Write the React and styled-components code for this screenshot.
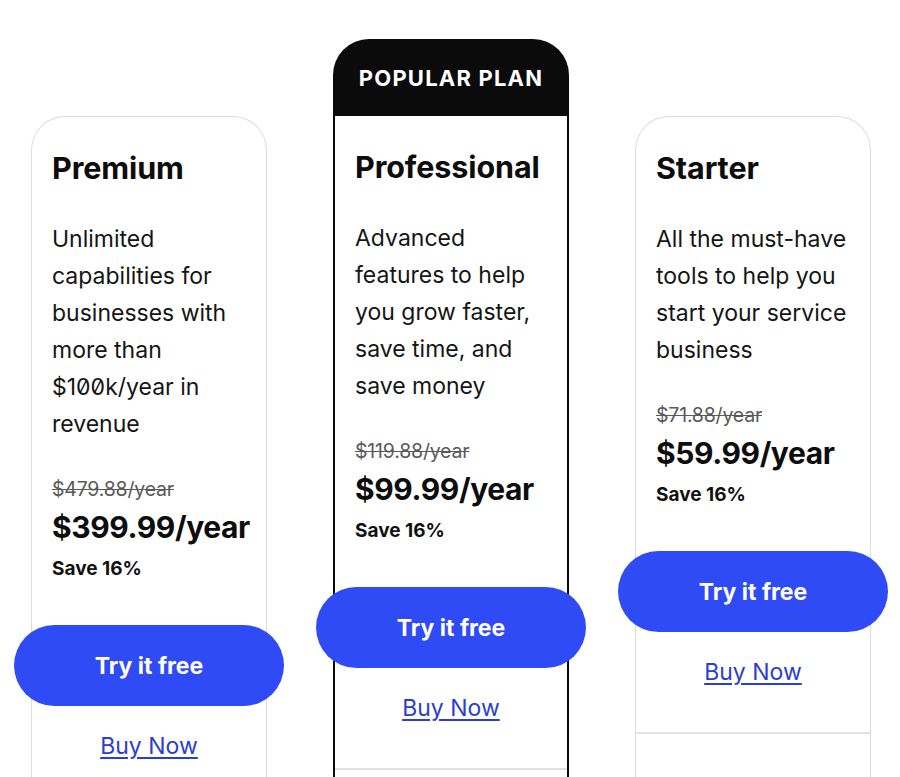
import React from "react";
import styled, { createGlobalStyle } from "styled-components";

const Global = createGlobalStyle`
  html, body { margin: 0; padding: 0; background: #fff; }
  body { font-family: Inter, "Noto Sans", "Liberation Sans", sans-serif; color: #111; overflow: hidden; }
`;

const Page = styled.div`
  display: flex;
  align-items: flex-start;
  gap: 66px;
  padding: 39px 0 0 31px;
  height: 777px;
  box-sizing: border-box;
  overflow: hidden;
`;

const Column = styled.div`
  width: 236px;
  flex-shrink: 0;
  display: flex;
  flex-direction: column;
  padding-top: ${(p) => (p.$featured ? "0" : "77px")};
`;

const Badge = styled.div`
  height: 77px;
  background: #0b0b0b;
  color: #fff;
  border-radius: 36px 36px 0 0;
  display: flex;
  align-items: center;
  justify-content: center;
  font-size: 22px;
  font-weight: 700;
  letter-spacing: 1.2px;
`;

const Card = styled.div`
  display: flex;
  flex-direction: column;
  background: #fff;
  border: ${(p) => (p.$featured ? "2px solid #0b0b0b" : "1.5px solid #dcdcdc")};
  border-top: ${(p) => (p.$featured ? "none" : undefined)};
  border-radius: ${(p) => (p.$featured ? "0" : "34px 34px 0 0")};
  border-bottom: none;
`;

const Body = styled.div`
  display: flex;
  flex-direction: column;
  padding: 32px 20px 0 20px;
`;

const Title = styled.h2`
  margin: 0;
  font-size: 30.5px;
  line-height: 38px;
  font-weight: 700;
  letter-spacing: -0.1px;
  color: #0d0d0d;
`;

const Desc = styled.p`
  margin: 34px 0 0;
  font-size: 23px;
  line-height: 37px;
  font-weight: 400;
  font-feature-settings: "zero" 1;
  color: #151515;
  white-space: nowrap;
`;

const OldPrice = styled.div`
  margin-top: 34px;
  font-size: 19.5px;
  line-height: 24px;
  color: #5a5a5a;
  text-decoration: line-through;
  letter-spacing: -0.2px;
`;

const Price = styled.div`
  margin-top: 7px;
  font-size: 30px;
  line-height: 38px;
  font-weight: 700;
  letter-spacing: -0.4px;
  color: #0d0d0d;
`;

const Save = styled.div`
  margin-top: 11px;
  font-size: 19px;
  line-height: 24px;
  font-weight: 700;
`;

const Button = styled.button`
  align-self: center;
  flex-shrink: 0;
  width: 270px;
  height: 81px;
  margin-top: 44px;
  border: none;
  border-radius: 41px;
  background: #2f4bf6;
  color: #fff;
  font-family: inherit;
  font-size: 23px;
  font-weight: 700;
  cursor: pointer;
`;

const BuyLink = styled.a`
  align-self: center;
  margin-top: 26px;
  font-size: 23px;
  line-height: 28px;
  color: #2a3ed4;
  text-decoration: underline;
  text-underline-offset: 3px;
  text-decoration-thickness: 2px;
`;

const Divider = styled.div`
  margin-top: 46px;
  height: 2px;
  background: #e2e2e2;
`;

const Footer = styled.div`
  height: 200px;
`;

const plans = [
  {
    name: "Premium",
    desc: ["Unlimited", "capabilities for", "businesses with", "more than", "$100k/year in", "revenue"],
    old: "$479.88/year",
    price: "$399.99/year",
  },
  {
    name: "Professional",
    featured: true,
    desc: ["Advanced", "features to help", "you grow faster,", "save time, and", "save money"],
    old: "$119.88/year",
    price: "$99.99/year",
  },
  {
    name: "Starter",
    desc: ["All the must-have", "tools to help you", "start your service", "business"],
    old: "$71.88/year",
    price: "$59.99/year",
  },
];

export default function App() {
  return (
    <>
      <Global />
      <Page>
        {plans.map((p) => (
          <Column key={p.name} $featured={p.featured}>
            {p.featured && <Badge>POPULAR PLAN</Badge>}
            <Card $featured={p.featured}>
              <Body>
                <Title>{p.name}</Title>
                <Desc>
                  {p.desc.map((l, i) => (
                    <React.Fragment key={i}>
                      {l}
                      {i < p.desc.length - 1 && <br />}
                    </React.Fragment>
                  ))}
                </Desc>
                <OldPrice>{p.old}</OldPrice>
                <Price>{p.price}</Price>
                <Save>Save 16%</Save>
                <Button>Try it free</Button>
                <BuyLink href="#">Buy Now</BuyLink>
              </Body>
              <Divider />
              <Footer />
            </Card>
          </Column>
        ))}
      </Page>
    </>
  );
}
